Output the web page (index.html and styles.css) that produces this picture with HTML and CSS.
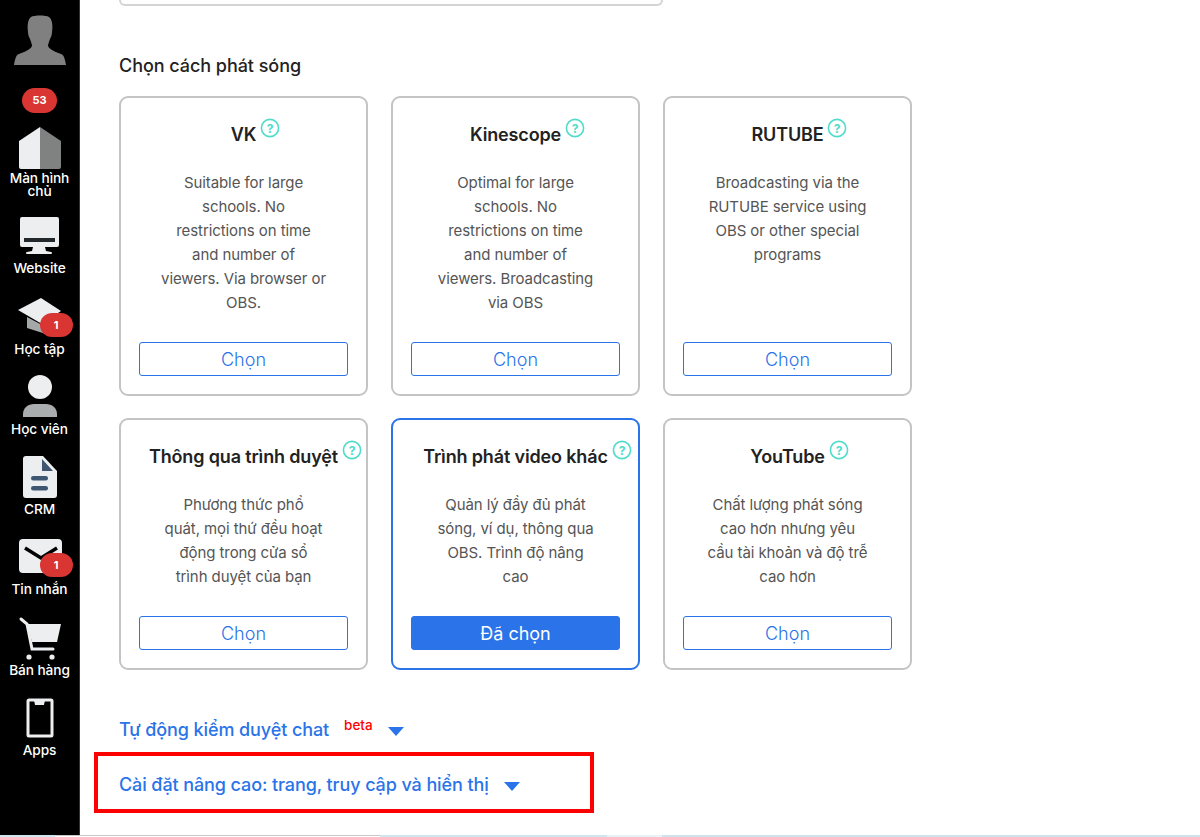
FILE: index.html
```html
<!DOCTYPE html>
<html lang="vi">
<head>
<meta charset="utf-8">
<title>Chọn cách phát sóng</title>
<link rel="stylesheet" href="styles.css">
</head>
<body>
<div class="page">
  <nav class="sidebar">
    <svg class="avatar" viewBox="0 0 52 50"><path fill="#808080" d="M17 2c3-2 15-2 18 0 3 2 4 8 3 15 0 3-1 5-2 7-1 3-2 5-2 7 2 4 8 6 13 8 3 1 4 5 5 11H0c1-6 2-10 5-11 5-2 11-4 13-8 0-2-1-4-2-7-1-2-2-4-2-7-1-7 0-13 3-15z"/></svg>
    <span class="count">53</span>
    <a class="item item-home">
      <svg class="ico" viewBox="0 0 42 42"><path fill="#eceeef" d="M21 0v42H2a2 2 0 0 1-2-2V14z"/><path fill="#7f8281" d="M21 0l21 14v26a2 2 0 0 1-2 2H21z"/></svg>
      <span class="label">Màn hình chủ</span>
    </a>
    <a class="item">
      <svg class="ico" viewBox="0 0 42 42"><path fill="#eceeef" d="M3 0h35a2 2 0 0 1 2 2v26a2 2 0 0 1-2 2H26l1 4 5 1a1 1 0 0 1 0 2H8a1 1 0 0 1 0-2l5-1 1-4H3a2 2 0 0 1-2-2V2a2 2 0 0 1 2-2z"/><rect x="5" y="21" width="31" height="4" fill="#22282c"/></svg>
      <span class="label">Website</span>
    </a>
    <a class="item">
      <span class="ico-wrap">
        <svg class="ico" viewBox="0 0 42 42"><path fill="#a4a8a8" d="M8 19l15 8 10-6v10l-6 5-19-6z"/><path fill="#eceeef" d="M22 0l20 13-19 13L-1 12z"/></svg>
        <span class="badge">1</span>
      </span>
      <span class="label">Học tập</span>
    </a>
    <a class="item">
      <svg class="ico" viewBox="0 0 42 42"><circle cx="21" cy="9" r="12" fill="#eceeef"/><path fill="#a9adad" d="M4 39v-3c0-6 5-10 11-10h12c6 0 11 4 11 10v3z"/></svg>
      <span class="label">Học viên</span>
    </a>
    <a class="item">
      <svg class="ico" viewBox="0 0 42 42"><path fill="#eceeef" d="M7-2h17l14 15v24a3 3 0 0 1-3 3H7a3 3 0 0 1-3-3V1a3 3 0 0 1 3-3z"/><path fill="#3f5672" d="M23 1l11 12H23z"/><rect x="12" y="18" width="17" height="4.5" rx="2.2" fill="#3f5672"/><rect x="12" y="28" width="17" height="4.5" rx="2.2" fill="#3f5672"/></svg>
      <span class="label">CRM</span>
    </a>
    <a class="item">
      <span class="ico-wrap">
        <svg class="ico" viewBox="0 0 42 42"><rect x="0" y="1" width="43" height="34" rx="4" fill="#eceeef"/><path fill="none" stroke="#000" stroke-width="3.5" d="M6 10l16 10 16-10"/></svg>
        <span class="badge">1</span>
      </span>
      <span class="label">Tin nhắn</span>
    </a>
    <a class="item">
      <svg class="ico" viewBox="0 0 42 42"><path fill="#eceeef" d="M8 5h34l-4 18H13z"/><path fill="none" stroke="#eceeef" stroke-width="3" stroke-linecap="round" d="M2 0l6 5 5 25h21"/><circle cx="10" cy="38" r="2.6" fill="#eceeef"/><circle cx="33" cy="38" r="2.6" fill="#eceeef"/></svg>
      <span class="label">Bán hàng</span>
    </a>
    <a class="item">
      <svg class="ico" viewBox="0 0 42 42"><rect x="9" y="1" width="24" height="36" rx="1" fill="none" stroke="#eceeef" stroke-width="3"/><path fill="#eceeef" d="M15 1h11l-1 5H16z"/></svg>
      <span class="label">Apps</span>
    </a>
  </nav>

  <main class="content">
    <div class="prev-card"></div>
    <h2 class="heading">Chọn cách phát sóng</h2>
    <div class="grid">
      <article class="card">
        <h3 class="title"><span class="title-text">VK<svg class="help" viewBox="0 0 20 20"><circle cx="10" cy="10" r="8.6"/><text x="10" y="14.5">?</text></svg></span></h3>
        <p class="desc">Suitable for large<br>schools. No<br>restrictions on time<br>and number of<br>viewers. Via browser or<br>OBS.</p>
        <button class="btn">Chọn</button>
      </article>
      <article class="card">
        <h3 class="title"><span class="title-text">Kinescope<svg class="help" viewBox="0 0 20 20"><circle cx="10" cy="10" r="8.6"/><text x="10" y="14.5">?</text></svg></span></h3>
        <p class="desc">Optimal for large<br>schools. No<br>restrictions on time<br>and number of<br>viewers. Broadcasting<br>via OBS</p>
        <button class="btn">Chọn</button>
      </article>
      <article class="card">
        <h3 class="title"><span class="title-text">RUTUBE<svg class="help" viewBox="0 0 20 20"><circle cx="10" cy="10" r="8.6"/><text x="10" y="14.5">?</text></svg></span></h3>
        <p class="desc">Broadcasting via the<br>RUTUBE service using<br>OBS or other special<br>programs</p>
        <button class="btn">Chọn</button>
      </article>
      <article class="card">
        <h3 class="title"><span class="title-text">Thông qua trình duyệt<svg class="help" viewBox="0 0 20 20"><circle cx="10" cy="10" r="8.6"/><text x="10" y="14.5">?</text></svg></span></h3>
        <p class="desc">Phương thức phổ<br>quát, mọi thứ đều hoạt<br>động trong cửa sổ<br>trình duyệt của bạn</p>
        <button class="btn">Chọn</button>
      </article>
      <article class="card card-active">
        <h3 class="title"><span class="title-text">Trình phát video khác<svg class="help" viewBox="0 0 20 20"><circle cx="10" cy="10" r="8.6"/><text x="10" y="14.5">?</text></svg></span></h3>
        <p class="desc">Quản lý đầy đủ phát<br>sóng, ví dụ, thông qua<br>OBS. Trình độ nâng<br>cao</p>
        <button class="btn btn-active">Đã chọn</button>
      </article>
      <article class="card">
        <h3 class="title"><span class="title-text">YouTube<svg class="help" viewBox="0 0 20 20"><circle cx="10" cy="10" r="8.6"/><text x="10" y="14.5">?</text></svg></span></h3>
        <p class="desc">Chất lượng phát sóng<br>cao hơn nhưng yêu<br>cầu tài khoản và độ trễ<br>cao hơn</p>
        <button class="btn">Chọn</button>
      </article>
    </div>
    <a class="link link-chat">Tự động kiểm duyệt chat<sup class="beta">beta</sup><span class="caret"></span></a>
    <div class="highlight">
      <a class="link">Cài đặt nâng cao: trang, truy cập và hiển thị<span class="caret"></span></a>
    </div>
  </main>
</div>
<div class="strip"><span class="strip-a"></span><span class="strip-b"></span><span class="strip-c"></span><span class="strip-d"></span><span class="strip-e"></span></div>
</body>
</html>
```

FILE: styles.css
```css
* { box-sizing: border-box; }
html, body { margin: 0; padding: 0; height: 837px; overflow: hidden; background: #fff; }
body { font-family: Inter, "Noto Sans", sans-serif; color: #222; }
.page { display: flex; height: 835px; overflow: hidden; }

.sidebar { width: 80px; flex: none; background: #000; border-right: 1px solid #333; display: flex; flex-direction: column; align-items: center; padding-top: 15px; }
.avatar { width: 52px; height: 50px; display: block; }
.count { margin-top: 23px; width: 35px; height: 25px; border-radius: 12.5px; background: #d93532; color: #fff; font-size: 11px; font-weight: 700; line-height: 25px; text-align: center; }
.item { display: flex; flex-direction: column; align-items: center; width: 80px; margin-top: 23.3px; }
.count + .item { margin-top: 14px; }
.item-home { margin-bottom: -3px; }
.ico-wrap { position: relative; display: block; height: 42px; }
.ico { width: 42px; height: 42px; display: block; overflow: visible; }
.label { margin-top: 3px; margin-bottom: -1px; width: 76px; text-align: center; color: #fff; font-size: 13.7px; font-weight: 500; line-height: 13px; letter-spacing: -0.1px; }
.badge { position: absolute; left: 21px; top: 15px; width: 33px; height: 24px; border-radius: 12px; background: #d93532; color: #fff; font-size: 11px; font-weight: 700; line-height: 24px; text-align: center; }

.content { flex: 1; padding-left: 39px; }
.prev-card { width: 544px; height: 6px; border: 2px solid #d4d4d4; border-top: 0; border-radius: 0 0 9px 9px; }
.heading { margin: 48px 0 18px; font-size: 18px; line-height: 24px; font-weight: 500; color: #222; letter-spacing: -0.05px; }
.grid { display: grid; grid-template-columns: repeat(3, 249px); grid-template-rows: 300px 252px; gap: 22px 23px; }
.card { display: flex; flex-direction: column; align-items: center; border: 2px solid #c4c4c4; border-radius: 9px; padding: 25px 18px 18px; }
.card-active { border-color: #2a73e8; }
.title { margin: 0; font-size: 18px; line-height: 24px; font-weight: 600; color: #222; text-align: center; letter-spacing: -0.15px; }
.title-text { position: relative; display: inline-block; white-space: nowrap; }
.help { position: absolute; left: calc(100% + 4px); top: -5px; width: 20px; height: 20px; }
.help circle { fill: none; stroke: #4fdccb; stroke-width: 1.6; }
.help text { fill: #4fdccb; font-family: Inter, sans-serif; font-size: 12px; font-weight: 700; text-anchor: middle; }
.desc { margin: 24px 0 0; font-size: 15px; line-height: 24px; font-weight: 400; color: #555; text-align: center; white-space: nowrap; letter-spacing: -0.08px; }
.btn { margin-top: auto; width: 209px; height: 34px; border: 1px solid #2a73e8; border-radius: 3px; background: #fff; color: #2a73e8; font-family: inherit; font-size: 18px; font-weight: 300; padding: 0; }
.btn-active { background: #2a73e8; color: #fff; font-weight: 400; }

.link { display: block; color: #2a73e8; font-size: 18px; font-weight: 500; line-height: 24px; white-space: nowrap; letter-spacing: -0.1px; }
.link-chat { margin-top: 48px; }
.beta { font-size: 13.5px; color: #f00; font-weight: 500; margin-left: 15px; line-height: 0; vertical-align: 6px; letter-spacing: 0; }
.caret { display: inline-block; width: 0; height: 0; margin-left: 15px; border: 8px solid transparent; border-top: 9px solid #2a73e8; border-bottom: 0; vertical-align: 0; }
.highlight { margin: 10px 0 0 -25px; width: 500px; height: 61px; border: 4px solid #f00; padding: 17px 0 0 21px; }

.strip { display: flex; height: 2px; }
.strip-a { width: 55px; background: #cfe6f0; }
.strip-b { width: 325px; background: #fff; border-top: 1px solid #c8c8c8; }
.strip-c { width: 227px; background: #cfe6f0; }
.strip-d { width: 55px; background: #e8f3f8; }
.strip-e { flex: 1; background: #cfe3ee; }
```
